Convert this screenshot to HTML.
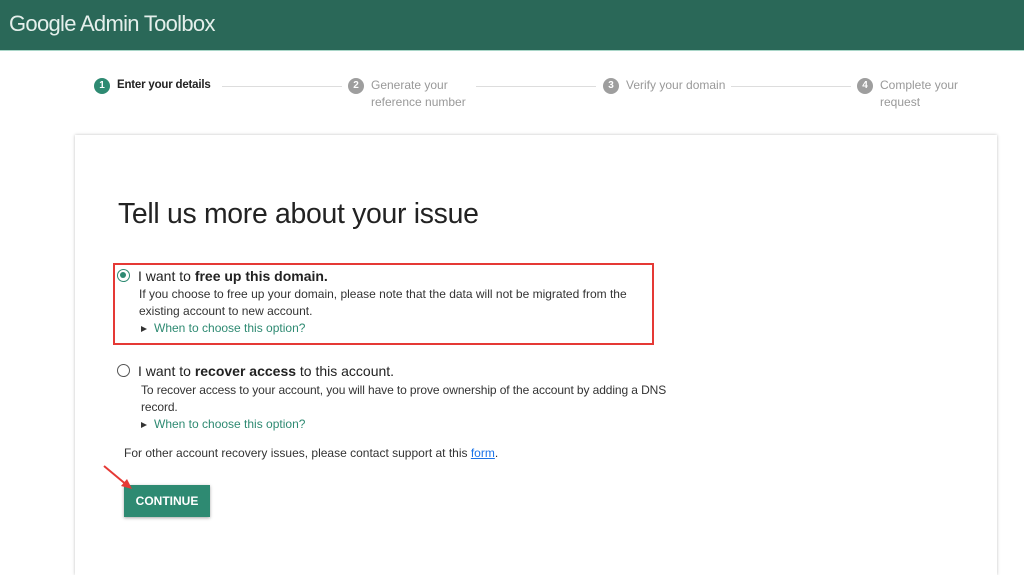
<!DOCTYPE html>
<html><head><style>
*{margin:0;padding:0;box-sizing:border-box}
body{width:1024px;height:564px;overflow:hidden;background:#fff;font-family:"Liberation Sans",Arial,sans-serif;position:relative;color:#222}
.hdr{position:absolute;left:0;top:0;width:1024px;height:51px;background:#2a6858;border-bottom:1px solid #a9d6c8}
.hdr span{position:absolute;left:9px;top:11px;font-size:22px;color:#e4efeb;letter-spacing:-0.7px}
.step{position:absolute;top:77px;font-size:12px;color:#999;line-height:17px}
.num{position:absolute;left:0;top:1px;width:16px;height:16px;border-radius:50%;background:#9e9e9e;color:#fff;font-size:10px;font-weight:bold;text-align:center;line-height:16px}
.step .t{position:absolute;left:23px;top:0;white-space:nowrap}
.line{position:absolute;top:86px;height:1px;background:#ddd}
.card{position:absolute;left:75px;top:135px;width:922px;height:440px;background:#fff;box-shadow:0 0 3px rgba(0,0,0,.25)}
h1{position:absolute;left:118px;top:198px;font-size:28.4px;font-weight:normal;color:#222;letter-spacing:-0.3px}
.radio{position:absolute;width:13px;height:13px;border-radius:50%;border:1.5px solid #555}
.radio.on{border-color:#2e8a72}
.radio.on::after{content:"";position:absolute;left:2px;top:2px;width:6px;height:6px;border-radius:50%;background:#2e8a72}
.t1{position:absolute;font-size:14px;color:#222}
.d{position:absolute;font-size:12px;color:#333;line-height:17px}
.lk{position:absolute;font-size:12px;color:#2e8a72}
.lk::before{content:"";display:inline-block;border-left:6px solid #333;border-top:3.5px solid transparent;border-bottom:3.5px solid transparent;margin-right:7px}
.box{position:absolute;left:113px;top:263px;width:541px;height:82px;border:2px solid #e53935}
.btn{position:absolute;left:124px;top:485px;width:86px;height:32px;background:#2e8a72;color:#fff;font-size:12px;font-weight:bold;text-align:center;line-height:32px;box-shadow:0 1px 3px rgba(0,0,0,.35)}
</style></head><body>
<div class="hdr"><span>Google Admin Toolbox</span></div>
<div class="step" style="left:94px"><div class="num" style="background:#2e8a72">1</div><div class="t" style="color:#222;font-weight:bold;font-size:11.5px;letter-spacing:-0.2px">Enter your details</div></div>
<div class="line" style="left:222px;width:120px"></div>
<div class="step" style="left:348px"><div class="num">2</div><div class="t">Generate your<br>reference number</div></div>
<div class="line" style="left:476px;width:120px"></div>
<div class="step" style="left:603px"><div class="num">3</div><div class="t">Verify your domain</div></div>
<div class="line" style="left:731px;width:120px"></div>
<div class="step" style="left:857px"><div class="num">4</div><div class="t">Complete your<br>request</div></div>
<div class="card"></div>
<h1>Tell us more about your issue</h1>
<div class="box"></div>
<div class="radio on" style="left:117px;top:269px"></div>
<div class="t1" style="left:138px;top:268px">I want to <b>free up this domain.</b></div>
<div class="d" style="left:139px;top:286px">If you choose to free up your domain, please note that the data will not be migrated from the<br>existing account to new account.</div>
<div class="lk" style="left:141px;top:321px">When to choose this option?</div>
<div class="radio" style="left:117px;top:364px"></div>
<div class="t1" style="left:138px;top:363px">I want to <b>recover access</b> to this account.</div>
<div class="d" style="left:141px;top:382px;letter-spacing:-0.1px">To recover access to your account, you will have to prove ownership of the account by adding a DNS<br>record.</div>
<div class="lk" style="left:141px;top:417px">When to choose this option?</div>
<div class="d" style="left:124px;top:445px">For other account recovery issues, please contact support at this <a style="color:#1a73e8;text-decoration:underline">form</a>.</div>
<div class="btn">CONTINUE</div>
<svg style="position:absolute;left:100px;top:462px" width="36" height="30"><line x1="4" y1="4" x2="28" y2="24" stroke="#e53935" stroke-width="2"/><polygon points="32,27 21,24 27,17" fill="#e53935"/></svg>
</body></html>
